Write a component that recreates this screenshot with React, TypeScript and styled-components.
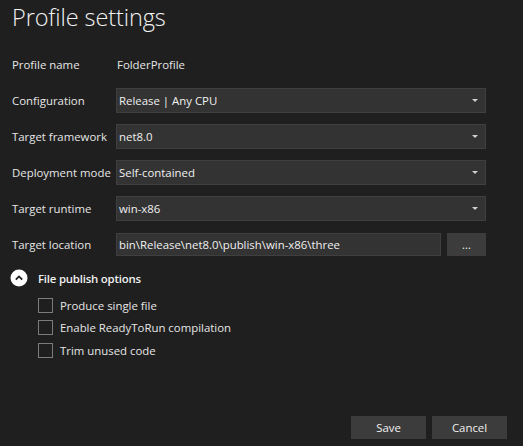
import React from 'react';
import styled, { createGlobalStyle } from 'styled-components';

const GlobalStyle = createGlobalStyle`
  html, body {
    margin: 0;
    padding: 0;
    background: #1f1f1f;
  }
  body {
    font-family: 'Open Sans', 'Noto Sans', sans-serif;
    font-size: 11.4px;
    color: #e6e6e6;
  }
`;

const Page = styled.div`
  min-height: 100vh;
  box-sizing: border-box;
  display: flex;
  flex-direction: column;
  padding: 0 0 7px 12px;
`;

const Title = styled.h1`
  margin: 0;
  height: 52px;
  padding-top: 1px;
  box-sizing: border-box;
  font-size: 23.5px;
  font-weight: 300;
  color: #f2f2f2;
  letter-spacing: -0.1px;
`;

const Form = styled.div`
  display: grid;
  grid-template-columns: 104px 370px;
  grid-auto-rows: 25px;
  row-gap: 11px;
  align-items: center;
`;

const Label = styled.div`
  color: #e6e6e6;
  white-space: nowrap;
`;

const Value = styled.div`
  padding-left: 1px;
  color: #e6e6e6;
`;

const Select = styled.div`
  height: 25px;
  box-sizing: border-box;
  background: #333333;
  border: 1px solid #3f3f3f;
  display: flex;
  align-items: center;
  justify-content: space-between;
  padding: 0 7px 0 2px;
  color: #f0f0f0;
`;

const Arrow = styled.span`
  width: 0;
  height: 0;
  border-left: 3px solid transparent;
  border-right: 3px solid transparent;
  border-top: 3px solid #d0d0d0;
`;

const PathRow = styled.div`
  display: flex;
  gap: 6px;
  align-items: center;
`;

const TextBox = styled.div`
  flex: 1;
  height: 23px;
  box-sizing: border-box;
  background: #333333;
  border: 1px solid #3f3f3f;
  display: flex;
  align-items: center;
  padding: 0 2px;
  color: #f0f0f0;
`;

const Button = styled.button<{ $width: number }>`
  width: ${p => p.$width}px;
  height: 23px;
  border: none;
  background: #3c3c3c;
  color: #f0f0f0;
  font: inherit;
  padding: 0;
  display: flex;
  align-items: center;
  justify-content: center;
`;

const Expander = styled.div`
  display: flex;
  align-items: center;
  gap: 10px;
  margin-top: 12px;
  margin-left: -2px;
  height: 18px;
  font-weight: 600;
  letter-spacing: -0.2px;
  color: #f0f0f0;
`;

const Options = styled.div`
  display: flex;
  flex-direction: column;
  margin-top: 7px;
  padding-left: 26px;
`;

const CheckRow = styled.label`
  display: flex;
  align-items: center;
  gap: 7px;
  height: 22.5px;
  color: #e6e6e6;
`;

const Box = styled.span`
  width: 15px;
  height: 15px;
  box-sizing: border-box;
  border: 1px solid #7c7c7c;
`;

const Footer = styled.div`
  margin-top: auto;
  display: flex;
  justify-content: flex-end;
  gap: 6px;
  padding-right: 16px;
`;

const ChevronCircle = () => (
  <svg width="18" height="18" viewBox="0 0 18 18">
    <circle cx="9" cy="9" r="8.5" fill="#ffffff" />
    <path d="M5.8 10.6 L9 7.4 L12.2 10.6" fill="none" stroke="#1f1f1f" strokeWidth="1.8" />
  </svg>
);

const selects: [string, string][] = [
  ['Configuration', 'Release | Any CPU'],
  ['Target framework', 'net8.0'],
  ['Deployment mode', 'Self-contained'],
  ['Target runtime', 'win-x86'],
];

const options = ['Produce single file', 'Enable ReadyToRun compilation', 'Trim unused code'];

const App: React.FC = () => {
  return (
    <>
      <GlobalStyle />
      <Page>
        <Title>Profile settings</Title>
        <Form>
          <Label>Profile name</Label>
          <Value>FolderProfile</Value>
          {selects.map(([label, value]) => (
            <React.Fragment key={label}>
              <Label>{label}</Label>
              <Select>
                <span>{value}</span>
                <Arrow />
              </Select>
            </React.Fragment>
          ))}
          <Label>Target location</Label>
          <PathRow>
            <TextBox>bin\Release\net8.0\publish\win-x86\three</TextBox>
            <Button $width={39}>...</Button>
          </PathRow>
        </Form>
        <Expander>
          <ChevronCircle />
          File publish options
        </Expander>
        <Options>
          {options.map(o => (
            <CheckRow key={o}>
              <Box />
              {o}
            </CheckRow>
          ))}
        </Options>
        <Footer>
          <Button $width={75}>Save</Button>
          <Button $width={75}>Cancel</Button>
        </Footer>
      </Page>
    </>
  );
};

export default App;
